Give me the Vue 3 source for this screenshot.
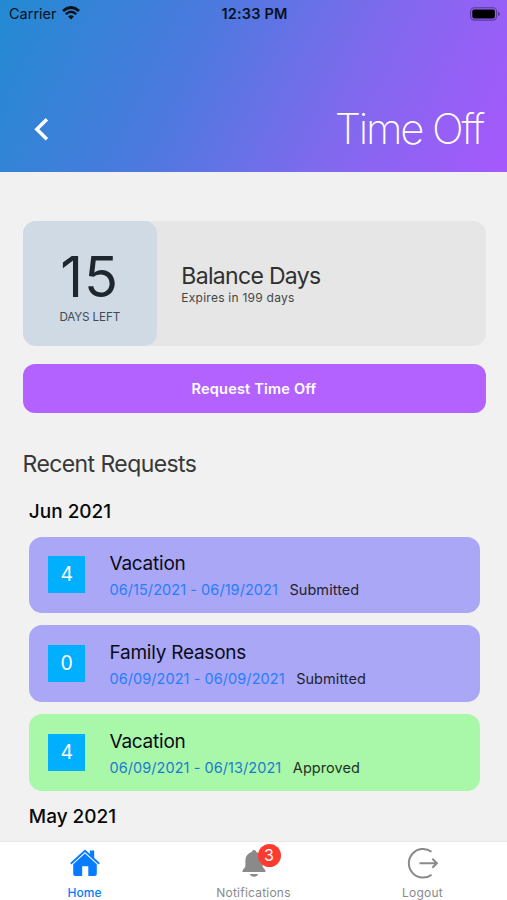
<script setup>
const requests = [
  { days: 4, title: 'Vacation', range: '06/15/2021 - 06/19/2021', status: 'Submitted' },
  { days: 0, title: 'Family Reasons', range: '06/09/2021 - 06/09/2021', status: 'Submitted' },
  { days: 4, title: 'Vacation', range: '06/09/2021 - 06/13/2021', status: 'Approved' },
]
</script>

<template>
  <div class="screen">
    <header class="header">
      <div class="status">
        <div class="carrier">
          <span class="carrier-name">Carrier</span>
          <svg class="wifi" viewBox="0 0 18 14">
            <path d="M1 5Q9-2 17 5" fill="none" stroke="#07111c" stroke-width="2.9" />
            <path d="M3.8 8.1Q9 3.5 14.2 8.1" fill="none" stroke="#07111c" stroke-width="2.4" />
            <path d="M6.1 10.4Q9 8.2 11.9 10.4L9 13.5Z" fill="#07111c" />
          </svg>
        </div>
        <span class="clock">12:33 PM</span>
        <svg class="battery" viewBox="0 0 30 14">
          <rect x=".6" y=".7" width="26" height="12.4" rx="3.8" fill="none" stroke="#201545" stroke-opacity=".5" stroke-width="1.1" />
          <rect x="2.3" y="2.4" width="22.6" height="9" rx="2" fill="#000" />
          <path d="M28.1 4.7Q30 5.4 30 6.9T28.1 9.1Z" fill="#201545" fill-opacity=".55" />
        </svg>
      </div>
      <div class="title-row">
        <svg class="back" viewBox="0 0 15 24">
          <path d="M12.9 2.2 2.8 12.2l10.1 10" fill="none" stroke="#fff" stroke-width="3.5" />
        </svg>
        <h1 class="title">Time Off</h1>
      </div>
    </header>

    <main class="content">
      <section class="balance">
        <div class="days">
          <span class="days-number">15</span>
          <span class="days-label">DAYS LEFT</span>
        </div>
        <div class="balance-info">
          <span class="balance-title">Balance Days</span>
          <span class="balance-sub">Expires in 199 days</span>
        </div>
      </section>
      <button class="request-button">Request Time Off</button>
      <h2 class="recent">Recent Requests</h2>
      <section class="month-group">
        <h3 class="month">Jun 2021</h3>
        <article v-for="(r, i) in requests" :key="i" class="card" :class="{ approved: r.status === 'Approved' }">
          <div class="count">{{ r.days }}</div>
          <div class="details">
            <span class="kind">{{ r.title }}</span>
            <div class="meta">
              <span class="range">{{ r.range }}</span>
              <span class="state">{{ r.status }}</span>
            </div>
          </div>
        </article>
        <h3 class="month last">May 2021</h3>
      </section>
    </main>

    <nav class="tabs">
      <div class="tab active">
        <svg class="tab-icon" viewBox="0 0 34 34">
          <path d="M21.8 3.5h4.4v8.8l-4.4-4.2Z" fill="currentColor" />
          <path d="M2.8 16.7 17 3.8l14.2 12.9" fill="none" stroke="currentColor" stroke-width="1.9" />
          <path d="M5.2 17.3 17 6.5l11.8 10.8V27q0 2-2 2h-6.5V19.2h-6.1V29H7.2q-2 0-2-2Z" fill="currentColor" />
        </svg>
        <span class="tab-label">Home</span>
      </div>
      <div class="tab">
        <div class="bell-wrap">
          <svg class="tab-icon" viewBox="0 0 34 34">
            <path d="M17 3q2 0 2.2 2.1c4.2 1.1 6.4 4.5 6.4 9v4.5c0 2.7 3 3.5 3 6.4H5.4c0-2.9 3-3.7 3-6.4v-4.5c0-4.5 2.2-7.9 6.4-9Q15 3 17 3Z" fill="currentColor" />
            <path d="M12.9 27h8.2q-.9 2.7-4.1 2.7T12.9 27Z" fill="currentColor" />
          </svg>
          <span class="notice">3</span>
        </div>
        <span class="tab-label">Notifications</span>
      </div>
      <div class="tab">
        <svg class="tab-icon" viewBox="0 0 34 34">
          <path d="M25.5 4.7A14.3 14.3 0 1 0 25.5 27.9" fill="none" stroke="currentColor" stroke-width="2" />
          <path d="M13.5 16.2h17M26.3 11.7l4.6 4.5-4.6 4.6" fill="none" stroke="currentColor" stroke-width="2" />
        </svg>
        <span class="tab-label">Logout</span>
      </div>
    </nav>
  </div>
</template>

<style>
body {
  margin: 0;
}
</style>

<style scoped>
* {
  box-sizing: border-box;
}
.screen {
  width: 507px;
  height: 900px;
  overflow: hidden;
  display: flex;
  flex-direction: column;
  background: #f1f1f1;
  font-family: Inter, "Liberation Sans", sans-serif;
  white-space: nowrap;
}
svg {
  display: block;
  flex: none;
}
.header {
  height: 172px;
  flex: none;
  background: linear-gradient(115deg, #228ad2 0%, #4e79df 38%, #8169ee 68%, #a658fc 100%);
}
.status {
  height: 28px;
  display: grid;
  grid-template-columns: 1fr auto 1fr;
  align-items: center;
  padding: 0 7px 0 9px;
  color: #07111c;
}
.carrier {
  display: flex;
  align-items: center;
  gap: 5.5px;
}
.carrier-name {
  font-size: 14.5px;
  line-height: 28px;
}
.wifi {
  width: 18px;
  height: 14px;
  margin-top: -2px;
}
.clock {
  font-size: 14.5px;
  font-weight: 600;
  line-height: 28px;
  letter-spacing: .2px;
}
.battery {
  width: 30px;
  height: 14px;
  justify-self: end;
  margin-top: -1px;
}
.title-row {
  display: flex;
  justify-content: space-between;
  align-items: center;
  padding: 75px 24px 0 33.5px;
}
.back {
  width: 15px;
  height: 24px;
}
.title {
  margin: 0;
  color: #fff;
  font-size: 42px;
  font-weight: 200;
  line-height: 52px;
  letter-spacing: -2.2px;
}
.content {
  flex: 1;
  min-height: 0;
  padding: 49px 21.5px 0 22.5px;
}
.balance {
  height: 124.5px;
  display: flex;
  border-radius: 13px;
  background: #e6e6e6;
}
.days {
  width: 134.5px;
  border-radius: 13px;
  background: #cfdae5;
  color: #20262e;
  display: flex;
  flex-direction: column;
  align-items: center;
  padding-top: 24px;
}
.days-number {
  font-size: 56px;
  line-height: 64px;
  letter-spacing: 1px;
}
.days-label {
  font-size: 11.7px;
  line-height: 16px;
  letter-spacing: -.15px;
  color: #414a54;
}
.balance-info {
  display: flex;
  flex-direction: column;
  align-items: flex-start;
  padding: 41px 0 0 24.3px;
}
.balance-title {
  font-size: 23px;
  line-height: 28px;
  letter-spacing: -.68px;
  color: #303030;
}
.balance-sub {
  font-size: 12px;
  line-height: 15px;
  letter-spacing: .25px;
  color: #444;
}
.request-button {
  display: block;
  width: 100%;
  height: 49px;
  margin: 18.2px 0 0;
  padding: 0;
  border: 0;
  border-radius: 12px;
  background: #b362ff;
  color: #fff;
  font: 600 14.5px/49px Inter, sans-serif;
  letter-spacing: .2px;
}
.recent {
  margin: 36px 0 0;
  font-size: 23px;
  font-weight: 400;
  line-height: 30px;
  letter-spacing: -.58px;
  color: #383838;
}
.month-group {
  padding: 0 6px 0 6.3px;
}
.month {
  margin: 21px 0 13px;
  font-size: 19px;
  font-weight: 500;
  line-height: 24px;
  color: #080808;
}
.card {
  height: 76.3px;
  margin-bottom: 12.5px;
  border-radius: 13px;
  background: #aaa7f7;
  display: flex;
  align-items: center;
  padding-left: 19.4px;
}
.card.approved {
  background: #a9f7a9;
}
.count {
  width: 37px;
  height: 37px;
  background: #00b0ff;
  color: #fff;
  font-size: 19.5px;
  line-height: 37px;
  text-align: center;
}
.details {
  padding: 4px 0 0 24.3px;
}
.kind {
  display: block;
  width: max-content;
  font-size: 19px;
  line-height: 26px;
  letter-spacing: -.24px;
  color: #0b0b15;
}
.meta {
  display: flex;
  align-items: center;
  gap: 11.5px;
  margin-top: 1px;
  font-size: 14.5px;
  line-height: 24px;
  letter-spacing: .06px;
}
.range {
  color: #287dff;
}
.approved .range {
  color: #1c7bd0;
}
.state {
  color: #22222f;
}
.approved .state {
  color: #223222;
}
.month.last {
  margin: 0;
  padding-top: 1.6px;
}
.tabs {
  height: 59.5px;
  flex: none;
  display: grid;
  grid-template-columns: repeat(3, 1fr);
  background: #fff;
  border-top: 1px solid #e9e9e9;
  color: #8a8a8a;
}
.tab {
  display: flex;
  flex-direction: column;
  align-items: center;
  padding-top: 5px;
}
.active {
  color: #087cff;
}
.tab-icon {
  width: 34px;
  height: 34px;
}
.tab-label {
  font-size: 12px;
  line-height: 16px;
  letter-spacing: .22px;
  margin-top: 4px;
}
.active .tab-label {
  font-weight: 500;
  letter-spacing: 0;
}
.bell-wrap {
  position: relative;
}
.notice {
  position: absolute;
  left: 21px;
  top: -2.5px;
  width: 23px;
  height: 23px;
  border-radius: 50%;
  background: #ff3b30;
  color: #fff;
  font-size: 16px;
  line-height: 23px;
  text-align: center;
}
</style>
